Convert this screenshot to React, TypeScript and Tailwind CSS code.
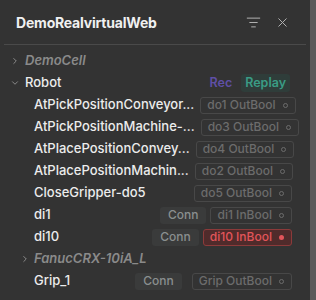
import { ListFilter, X, ChevronRight, ChevronDown } from "lucide-react";

type Signal = {
  name: string;
  badge: string;
  conn?: boolean;
  active?: boolean;
};

const signals: Signal[] = [
  { name: "AtPickPositionConveyor...", badge: "do1 OutBool" },
  { name: "AtPickPositionMachine-...", badge: "do3 OutBool" },
  { name: "AtPlacePositionConvey...", badge: "do4 OutBool" },
  { name: "AtPlacePositionMachin...", badge: "do2 OutBool" },
  { name: "CloseGripper-do5", badge: "do5 OutBool" },
  { name: "di1", badge: "di1 InBool", conn: true },
  { name: "di10", badge: "di10 InBool", conn: true, active: true },
];

// small status badge on the right of a row
const Badge = ({ label, active }: { label: string; active?: boolean }) => (
  <span
    className={
      active
        ? "flex shrink-0 items-center gap-[7px] h-[17px] pl-[6px] pr-[7px] rounded-[3px] border border-[#8c3a3a] bg-[#502b2b] text-[#e2555a] text-[12px] font-medium whitespace-nowrap"
        : "flex shrink-0 items-center gap-[7px] h-[17px] pl-[6px] pr-[7px] rounded-[3px] border border-[#484848] text-[#6c6c6c] text-[12px] font-medium whitespace-nowrap"
    }
  >
    {label}
    {active ? (
      <span className="w-[5px] h-[5px] rounded-full bg-[#e2555a]" />
    ) : (
      <span className="w-[5px] h-[5px] rounded-full border border-[#6c6c6c]" />
    )}
  </span>
);

const Conn = () => (
  <span className="flex shrink-0 items-center h-[17px] px-[8px] rounded-[3px] bg-[#3a3b3b] text-[#8a8f8f] text-[12px] font-medium">
    Conn
  </span>
);

export default function App() {
  return (
    <div
      className="w-[316px] h-[300px] flex bg-[#5a5a5a] overflow-hidden"
      style={{ fontFamily: "Inter, 'Noto Sans', sans-serif" }}
    >
      <div className="w-[310px] h-full bg-[#333333] flex flex-col">
        {/* Header */}
        <div className="h-[44px] flex items-center justify-between pl-4 pr-[20px]">
          <span className="text-[14px] font-bold text-[#f0f0f0] tracking-[-0.2px]">
            DemoRealvirtualWeb
          </span>
          <div className="flex items-center gap-[14px] text-[#b0b0b0]">
            <ListFilter size={15} strokeWidth={1.6} />
            <X size={15} strokeWidth={1.6} />
          </div>
        </div>
        <div className="mx-1 border-t border-[#4a4a4a]" />

        {/* Tree */}
        <div className="pt-[5px] flex flex-col text-[13px] text-[#ececec] whitespace-nowrap">
          <div className="h-[22px] flex items-center pl-[10px]">
            <ChevronRight size={10} strokeWidth={2} className="text-[#9a9a9a]" />
            <span className="ml-[5px] italic font-semibold text-[#8a8a8a]">DemoCell</span>
          </div>
          <div className="h-[22px] flex items-center pl-[10px] pr-[20px]">
            <ChevronDown size={10} strokeWidth={2} className="text-[#9a9a9a]" />
            <span className="ml-[5px] font-medium">Robot</span>
            <div className="ml-auto flex items-center gap-[9px] text-[12.5px] font-semibold">
              <span className="text-[#5f4fa6]">Rec</span>
              <span className="px-[4px] rounded-[3px] bg-[#2f3d3a] text-[#3a9c85]">Replay</span>
            </div>
          </div>
          {signals.map((s) => (
            <div key={s.name} className="h-[22px] flex items-center pl-[34px] pr-[18px]">
              <span className="font-medium">{s.name}</span>
              <div className="ml-auto pl-[6px] flex items-center gap-[4px]">
                {s.conn && <Conn />}
                <Badge label={s.badge} active={s.active} />
              </div>
            </div>
          ))}
          <div className="h-[22px] flex items-center pl-[20px]">
            <ChevronRight size={10} strokeWidth={2} className="text-[#9a9a9a]" />
            <span className="ml-[4px] italic font-semibold text-[#8a8a8a]">FanucCRX-10iA_L</span>
          </div>
          <div className="h-[22px] flex items-center pl-[34px] pr-[18px]">
            <span className="font-medium">Grip_1</span>
            <div className="ml-auto flex items-center gap-[10px]">
              <Conn />
              <Badge label="Grip OutBool" />
            </div>
          </div>
        </div>
      </div>
      <div className="flex-1" />
    </div>
  );
}
